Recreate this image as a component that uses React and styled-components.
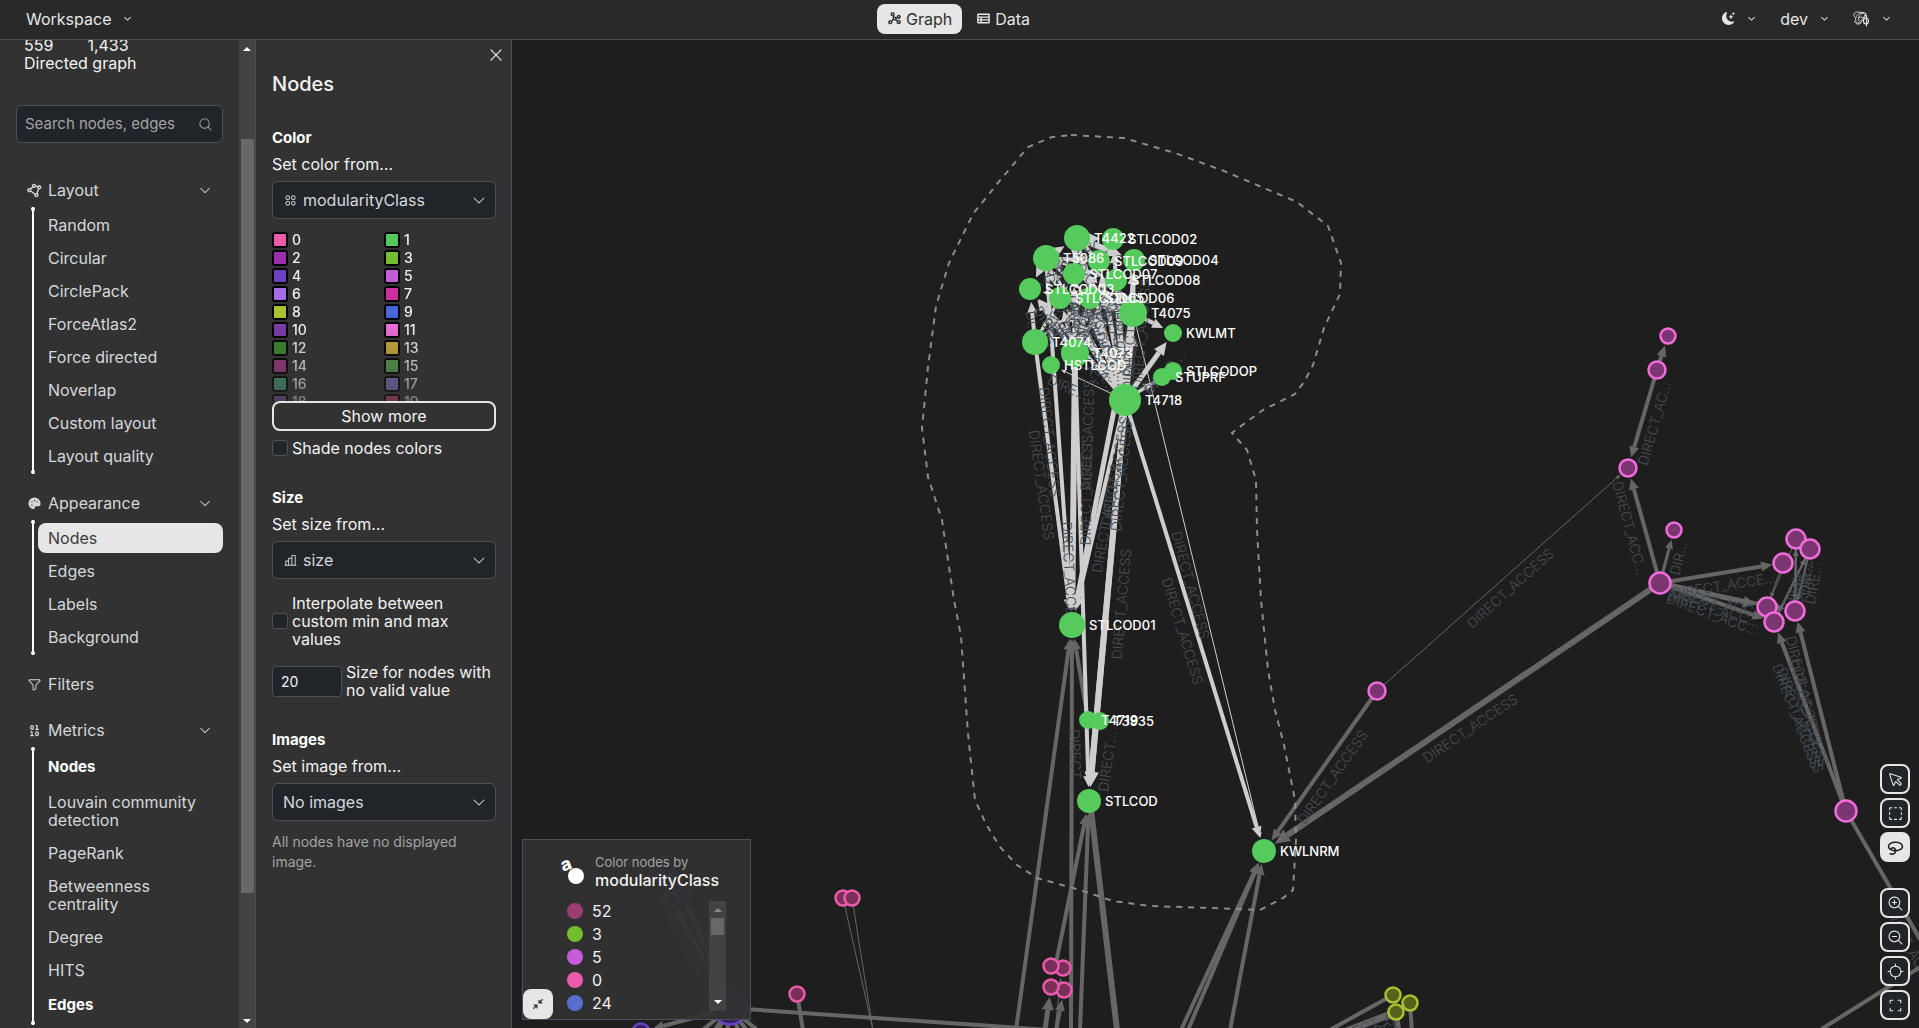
import React, { useState } from 'react';
import styled, { createGlobalStyle, css } from 'styled-components';
import {
  PiArrowsInSimpleBold,
  PiCaretDown,
  PiCaretDownBold,
  PiChartBar,
  PiCirclesFour,
  PiCornersOut,
  PiCursor,
  PiFunnel,
  PiGps,
  PiGraphBold,
  PiLassoBold,
  PiMagnifyingGlass,
  PiMagnifyingGlassMinus,
  PiMagnifyingGlassPlus,
  PiPaletteFill,
  PiPolygonBold,
  PiSelection,
  PiTableBold,
  PiX
} from 'react-icons/pi';
import { BsMoonStarsFill } from 'react-icons/bs';
import { LuBinary } from 'react-icons/lu';

const theme = {
  header: '#292929',
  panel: '#323232',
  stage: '#1e1e1e',
  field: '#212529',
  border: '#495057',
  light: '#e6e6e6',
  text: '#f2f2f2',
  nav: '#d5d8db',
  muted: '#a3a3a3',
  track: '#424242',
  thumb: '#686868'
};

const GlobalStyle = createGlobalStyle`
  * {
    box-sizing: border-box;
  }

  body {
    margin: 0;
    background: ${theme.stage};
    color: ${theme.text};
    font-family: Inter, 'DM Sans', sans-serif;
    font-size: 16px;
    line-height: 18px;
  }

  button, input, select {
    font: inherit;
    color: inherit;
  }

  button {
    cursor: pointer;
  }

  h2, h3, p, ul {
    margin: 0;
    padding: 0;
  }
`;

const Page = styled.div`
  display: flex;
  flex-direction: column;
  height: 100vh;
  overflow: hidden;
`;

const Header = styled.header`
  display: grid;
  grid-template-columns: 1fr auto 1fr;
  align-items: center;
  height: 40px;
  padding: 0 18px 2px 16px;
  background: ${theme.header};
  border-bottom: 1px solid ${theme.border};
  flex-shrink: 0;
`;

const HeaderGroup = styled.div`
  display: flex;
  align-items: center;
  justify-content: ${props => props.$end ? 'flex-end' : 'flex-start'};
  gap: 4px;
`;

const HeaderButton = styled.button`
  display: flex;
  align-items: center;
  gap: ${props => props.$menu ? 12 : 4}px;
  height: 30px;
  padding: 0 10px;
  border: none;
  border-radius: 8px;
  background: ${props => props.$active ? theme.light : 'transparent'};
  color: ${props => props.$active ? '#2f2f2f' : theme.light};
`;

const Body = styled.div`
  display: flex;
  flex: 1;
  min-height: 0;
`;

const Sidebar = styled.aside`
  display: flex;
  width: 256px;
  flex-shrink: 0;
  background: ${theme.panel};
  border-right: 1px solid ${theme.border};
  overflow: hidden;
`;

const SidebarContent = styled.div`
  flex: 1;
  min-width: 0;
  margin-top: -4px;
  padding: 0 16px;
`;

const Scrollbar = styled.div`
  display: flex;
  flex-direction: column;
  align-items: center;
  justify-content: space-between;
  width: ${props => props.$wide ? 17 : 16}px;
  flex-shrink: 0;
  padding: ${props => props.$wide ? '7px 0' : '7px 0 5px'};
  background: ${theme.track};
`;

const ScrollArrow = styled.span`
  width: 0;
  height: 0;
  border: 4px solid transparent;
  ${props => props.$down
    ? css`border-top-color: #fff; border-bottom: none;`
    : css`border-bottom-color: ${props.$dim ? '#8a8a8a' : '#fff'}; border-top: none;`}
`;

const ScrollTrack = styled.div`
  display: flex;
  flex-direction: column;
  flex: 1;
  width: 13px;
  padding: 6px 0;
`;

const ScrollSpace = styled.span`
  flex: ${props => props.$part};
`;

const ScrollThumb = styled.span`
  flex: ${props => props.$part};
  background: ${theme.thumb};
`;

const Counts = styled.div`
  display: flex;
  gap: 34px;
  padding: 0 8px;
`;

const GraphType = styled.p`
  padding: 0 8px;
`;

const Search = styled.label`
  display: flex;
  align-items: center;
  height: 38px;
  margin: 33px 0 30px;
  padding: 0 9px 0 8px;
  background: ${theme.field};
  border: 1px solid ${theme.border};
  border-radius: 6px;
  color: ${theme.muted};
  font-size: 15px;

  input {
    flex: 1;
    min-width: 0;
    padding: 0;
    background: none;
    border: none;
    outline: none;
  }

  input::placeholder {
    color: ${theme.muted};
    opacity: 1;
  }
`;

const NavSection = styled.section`
  margin-bottom: 12px;
`;

const NavHeading = styled.button`
  display: grid;
  grid-template-columns: 14px 1fr auto;
  align-items: center;
  gap: 7px;
  width: 100%;
  height: 34px;
  padding: 0 11px;
  border: none;
  background: none;
  color: ${theme.nav};
  text-align: left;
`;

const NavList = styled.ul`
  position: relative;
  display: flex;
  flex-direction: column;
  gap: 3px;
  margin-left: 16px;
  padding: 3px 0 3px 4px;
  list-style: none;
  border-left: 2px solid #fff;

  &::before,
  &::after {
    content: '';
    position: absolute;
    left: -3px;
    width: 4px;
    height: 4px;
    border-radius: 50%;
    background: #fff;
  }

  &::before {
    top: 0;
  }

  &::after {
    bottom: 0;
  }
`;

const NavItem = styled.button`
  display: block;
  width: 100%;
  padding: 6px 10px;
  border: none;
  border-radius: 8px;
  background: ${props => props.$active ? theme.light : 'transparent'};
  color: ${props => props.$active ? '#3a3a3a' : theme.nav};
  text-align: left;
`;

const NavSubhead = styled.h3`
  padding: 8px 10px;
  font-size: 15px;
  font-weight: 700;
  color: #fff;
`;

const Panel = styled.section`
  width: 256px;
  flex-shrink: 0;
  padding: 6px 15px 6px 16px;
  background: ${theme.panel};
  border-right: 1px solid ${theme.border};
`;

const CloseRow = styled.div`
  display: flex;
  justify-content: flex-end;
  margin-right: -9px;
`;

const CloseButton = styled.button`
  display: flex;
  padding: 0;
  border: none;
  background: none;
`;

const PanelTitle = styled.h2`
  margin: 8px 0 33px;
  font-size: 20px;
  line-height: 24px;
  font-weight: 500;
`;

const Block = styled.section`
  margin-bottom: 32px;
`;

const BlockTitle = styled.h3`
  margin-bottom: 8px;
  font-size: 15px;
  font-weight: 700;
  color: #fff;
`;

const FieldLabel = styled.label`
  display: block;
  margin-bottom: 8px;
`;

const SelectBox = styled.div`
  display: flex;
  align-items: center;
  gap: 5px;
  height: 38px;
  padding: 0 8px 0 10px;
  background: ${theme.field};
  border: 1px solid ${theme.border};
  border-radius: 6px;
  color: ${theme.nav};

  select {
    flex: 1;
    min-width: 0;
    padding: 0;
    appearance: none;
    background: none;
    border: none;
    outline: none;
  }
`;

const Palette = styled.div`
  display: grid;
  grid-template-columns: 1fr 1fr;
  grid-auto-rows: 18px;
  height: 170px;
  margin-top: 12px;
  overflow: hidden;
  font-size: 14px;
  font-weight: 500;
  mask-image: linear-gradient(#000 55%, rgba(0, 0, 0, 0.4));
`;

const PaletteEntry = styled.label`
  display: flex;
  align-items: center;
  gap: 4px;
`;

const Swatch = styled.input`
  width: 16px;
  height: 16px;
  padding: 0;
  appearance: none;
  border: 2px solid #000;
  border-radius: 3px;
  background: none;

  &::-webkit-color-swatch-wrapper {
    padding: 0;
  }

  &::-webkit-color-swatch {
    border: none;
    border-radius: 0;
  }
`;

const ShowMore = styled.button`
  display: block;
  width: 100%;
  height: 30px;
  margin-bottom: 8px;
  padding: 0;
  background: ${theme.panel};
  border: 2px solid ${theme.light};
  border-radius: 8px;
`;

const CheckLabel = styled.label`
  display: flex;
  align-items: center;
  gap: 4px;
  margin-top: ${props => props.$spaced ? 15 : 0}px;
`;

const Checkbox = styled.input`
  width: 16px;
  height: 16px;
  flex-shrink: 0;
  margin: 0;
  appearance: none;
  background: ${theme.field};
  border: 1px solid ${theme.border};
  border-radius: 3px;
`;

const NumberRow = styled.label`
  display: flex;
  align-items: center;
  gap: 4px;
  margin-top: 15px;
`;

const NumberInput = styled.input`
  width: 70px;
  height: 31px;
  flex-shrink: 0;
  padding: 0 8px;
  background: ${theme.field};
  border: 1px solid ${theme.border};
  border-radius: 4px;
  font-size: 14px;
`;

const Hint = styled.p`
  margin-top: 11px;
  font-size: 14px;
  line-height: 20px;
  color: ${theme.muted};
`;

const Stage = styled.main`
  position: relative;
  flex: 1;
  min-width: 0;
`;

const GraphSvg = styled.svg`
  display: block;
  width: 100%;
  height: 100%;
  font-family: Inter, sans-serif;
`;

const NodeLabel = styled.text`
  fill: #fff;
  font-size: 13px;
  font-weight: 500;
  dominant-baseline: central;
`;

const EdgeLabel = styled.text`
  fill: #454d55;
  font-size: 14px;
  font-weight: 300;
  text-anchor: middle;
  dominant-baseline: central;
`;

const Legend = styled.aside`
  position: absolute;
  left: 10px;
  bottom: 8px;
  width: 229px;
  padding: 13px 24px 8px 44px;
  background: rgba(50, 50, 50, 0.93);
  border: 1px solid ${theme.border};
`;

const LegendHeader = styled.div`
  display: flex;
  align-items: center;
  gap: 10px;
  margin-left: -6px;
  white-space: nowrap;
`;

const LegendCaption = styled.p`
  font-size: 13px;
  color: ${theme.muted};
`;

const LegendTitle = styled.p`
  font-weight: 500;
`;

const LegendBody = styled.div`
  display: flex;
  justify-content: space-between;
  height: 110px;
  margin-top: 12px;
`;

const LegendList = styled.ul`
  display: flex;
  flex-direction: column;
  gap: 3px;
  list-style: none;
  overflow: hidden;

  li {
    display: flex;
    align-items: center;
    gap: 9px;
    height: 20px;
    flex-shrink: 0;
  }
`;

const Dot = styled.span`
  width: 16px;
  height: 16px;
  border-radius: 50%;
  background: ${props => props.$color};
`;

const CollapseButton = styled.button`
  position: absolute;
  left: 0;
  bottom: 0;
  display: flex;
  align-items: center;
  justify-content: center;
  width: 30px;
  height: 30px;
  padding: 0;
  border: none;
  border-radius: 8px;
  background: ${theme.light};
  color: #2f2f2f;
`;

const Toolbar = styled.div`
  position: absolute;
  right: 9px;
  bottom: 8px;
  display: flex;
  flex-direction: column;
  gap: 26px;
`;

const ToolGroup = styled.div`
  display: flex;
  flex-direction: column;
  gap: 4px;
`;

const ToolButton = styled.button`
  display: flex;
  align-items: center;
  justify-content: center;
  width: 30px;
  height: 30px;
  padding: 0;
  border: 2px solid ${theme.light};
  border-radius: 8px;
  background: ${props => props.$active ? theme.light : theme.field};
  color: ${props => props.$active ? theme.field : theme.light};
`;

const layouts = [
  'Random', 'Circular', 'CirclePack', 'ForceAtlas2', 'Force directed',
  'Noverlap', 'Custom layout', 'Layout quality'
];

const appearances = ['Nodes', 'Edges', 'Labels', 'Background'];

const nodeMetrics = [
  'Louvain community detection', 'PageRank', 'Betweenness centrality', 'Degree', 'HITS'
];

const palette = [
  '#ea5bab', '#50c95a', '#9a2eab', '#73bd2f', '#6a42c1', '#c65bdb', '#a56be6',
  '#cd2fa2', '#a9c133', '#4a66dd', '#7b3aa5', '#ee6cdb', '#3c8c2a', '#c9ae3a',
  '#a03a86', '#55a452', '#43a276', '#8270c4', '#7d4fa8', '#d13f77'
];

const legendItems = [
  ['52', '#9a3d70'],
  ['3', '#73bd2f'],
  ['5', '#c65bdb'],
  ['0', '#ea5bab'],
  ['24', '#566ed0']
];

// id: [x, y, radius, label]
const selectedNodes = {
  a: [1077, 238, 13, 'T4422'],
  b: [1113, 239, 11, 'STLCOD02'],
  c: [1046, 258, 13, 'T5086'],
  d: [1099, 261, 11, 'STLCOD09'],
  e: [1134, 260, 11, 'STLCOD04'],
  f: [1074, 274, 11, 'STLCOD07'],
  g: [1116, 280, 11, 'STLCOD08'],
  h: [1030, 289, 11, 'STLCOD03'],
  i: [1060, 298, 11, 'STLCOD05'],
  j: [1090, 298, 11, 'STLCOD06'],
  k: [1133, 313, 14, 'T4075'],
  l: [1173, 333, 9, 'KWLMT'],
  m: [1035, 342, 13, 'T4074'],
  n: [1075, 353, 14, 'T4073'],
  o: [1051, 365, 9, 'HSTLCOD'],
  p: [1173, 371, 9, 'STLCODOP'],
  q: [1162, 377, 9, 'STUPRF'],
  r: [1125, 400, 16, 'T4718'],
  s: [1072, 625, 13, 'STLCOD01'],
  t: [1088, 720, 9, 'T4719'],
  u: [1100, 721, 9, 'T3935'],
  v: [1089, 801, 12, 'STLCOD'],
  w: [1264, 851, 12, 'KWLNRM']
};

const groups = {
  orchid: { stroke: '#f06cdb', fill: '#7b3672' },
  pink: { stroke: '#ea5bab', fill: '#7a2f58' },
  olive: { stroke: '#a9c133', fill: '#56621c' },
  violet: { stroke: '#6a42c1', fill: '#322263' }
};

const otherNodes = [
  [1668, 336, 9, 'orchid'], [1657, 370, 10, 'orchid'], [1628, 468, 10, 'orchid'],
  [1674, 530, 9, 'orchid'], [1660, 583, 12, 'orchid'], [1796, 539, 11, 'orchid'],
  [1810, 549, 11, 'orchid'], [1783, 563, 11, 'orchid'], [1767, 607, 11, 'orchid'],
  [1774, 622, 11, 'orchid'], [1795, 611, 11, 'orchid'], [1846, 811, 12, 'orchid'],
  [1377, 691, 10, 'orchid'],
  [843, 898, 9, 'pink'], [852, 898, 9, 'pink'], [797, 994, 9, 'pink'],
  [1063, 968, 9, 'pink'], [1051, 966, 9, 'pink'], [1064, 990, 9, 'pink'],
  [1051, 987, 9, 'pink'],
  [1393, 995, 9, 'olive'], [1410, 1003, 9, 'olive'], [1396, 1012, 9, 'olive'],
  [730, 1008, 18, 'violet'], [641, 1032, 10, 'violet'], [671, 899, 8, 'violet'],
  [683, 894, 8, 'violet'], [658, 872, 8, 'violet'], [668, 869, 8, 'violet']
];

// [x1, y1, x2, y2, target radius, width]
const dimEdges = [
  [1016, 1030, 1072, 625, 14, 4], [1071, 1030, 1072, 625, 14, 4],
  [1088, 720, 1072, 625, 14, 4], [1080, 1030, 1089, 801, 13, 4],
  [1117, 1030, 1090, 801, 0, 6], [1055, 968, 1089, 801, 13, 4],
  [1045, 1030, 1051, 987, 10, 5], [1056, 1030, 1064, 990, 10, 4],
  [1055, 1030, 1062, 968, 10, 1],
  [1181, 1030, 1264, 851, 13, 4], [1188, 1030, 1264, 851, 13, 4],
  [1230, 1030, 1264, 851, 13, 4],
  [1377, 691, 1264, 851, 13, 4], [1660, 583, 1264, 851, 13, 6],
  [1377, 691, 1628, 468, 10, 1], [1657, 370, 1668, 336, 10, 4],
  [1657, 370, 1628, 468, 11, 4], [1660, 583, 1628, 468, 11, 4],
  [1660, 583, 1674, 530, 10, 3], [1660, 583, 1783, 563, 11, 4],
  [1660, 583, 1767, 607, 11, 5], [1660, 583, 1774, 622, 11, 4],
  [1660, 583, 1795, 611, 11, 3], [1846, 811, 1774, 622, 11, 4],
  [1846, 811, 1795, 611, 11, 4], [1846, 811, 1925, 948, 0, 4],
  [1820, 1030, 1925, 964, 0, 4],
  [1783, 563, 1767, 607, 10, 1], [1796, 539, 1767, 607, 10, 1],
  [1796, 539, 1795, 611, 10, 2], [1795, 611, 1796, 539, 10, 2],
  [1810, 549, 1774, 622, 10, 2], [1774, 622, 1810, 549, 10, 2],
  [1810, 549, 1795, 611, 10, 2],
  [843, 898, 873, 1030, 0, 1], [852, 898, 873, 1030, 0, 1],
  [797, 994, 803, 1030, 0, 4], [730, 1008, 1050, 1030, 0, 4],
  [730, 1008, 641, 1032, 12, 4], [730, 1008, 671, 899, 10, 4],
  [730, 1008, 683, 894, 10, 4], [730, 1008, 690, 1040, 0, 4],
  [730, 1008, 710, 1040, 0, 6], [730, 1008, 726, 1040, 0, 4],
  [730, 1008, 742, 1040, 0, 4], [730, 1008, 754, 1040, 0, 4],
  [730, 1008, 770, 1040, 0, 4],
  [1393, 995, 1326, 1032, 0, 4], [1396, 1012, 1344, 1032, 0, 7],
  [1396, 1012, 1399, 1032, 0, 5], [1410, 1003, 1412, 1032, 0, 4]
];

// [source, target, width]
const brightLinks = [
  ['r', 'w', 4], ['k', 'w', 1], ['r', 's', 4], ['k', 's', 5], ['n', 's', 6],
  ['m', 's', 4], ['c', 's', 4], ['n', 'v', 4], ['r', 'v', 6], ['k', 'v', 6],
  ['k', 'l', 4], ['r', 'l', 5], ['r', 'q', 3], ['r', 'p', 3], ['r', 'o', 1],
  ['r', 'k', 7], ['r', 'g', 6], ['r', 'j', 7], ['r', 'i', 5], ['r', 'f', 5],
  ['r', 'h', 4], ['r', 'd', 5], ['r', 'e', 4], ['r', 'b', 4], ['a', 'b', 5],
  ['c', 'a', 7], ['a', 'd', 5], ['a', 'e', 6], ['c', 'h', 7], ['c', 'f', 5],
  ['c', 'd', 4], ['m', 'h', 4], ['m', 'i', 3], ['n', 'i', 4], ['n', 'j', 4],
  ['n', 'f', 5], ['n', 'h', 4], ['k', 'g', 5], ['k', 'j', 5], ['k', 'e', 4],
  ['k', 'd', 4], ['k', 'f', 3], ['a', 'g', 4], ['a', 'j', 4], ['a', 'f', 4],
  ['k', 'i', 3], ['k', 'h', 2], ['c', 'g', 3], ['c', 'j', 3], ['c', 'i', 4],
  ['n', 'd', 3], ['n', 'g', 4], ['m', 'f', 3], ['m', 'j', 2], ['r', 'c', 3],
  ['r', 'a', 4]
];

const FULL = 'DIRECT_ACCESS';

// [center x, center y, angle, text]
const edgeLabels = [
  [1470, 728, -34, FULL], [1332, 777, -55, FULL], [1510, 588, -42, FULL],
  [1654, 423, -74, 'DIRECT_AC...'], [1630, 528, 75, 'DIRECT_ACC...'],
  [1678, 558, -76, 'DIR...'], [1724, 585, -9, 'DIRECT_ACCE...'],
  [1718, 602, 13, 'DIRECT_ACC...'], [1714, 608, 17, 'DIRECT_ACC...'],
  [1713, 614, 20, 'DIRECT_ACC...'], [1813, 583, -80, 'DIRE...'],
  [1802, 584, -75, 'DIRE...'], [1797, 582, -66, 'DIREC...'], [1806, 578, -84, 'DIR...'],
  [1804, 690, 76, FULL], [1809, 713, 74, FULL], [1797, 716, 69, FULL],
  [1801, 720, 70, FULL],
  [1191, 585, 75, FULL], [1183, 631, 73, FULL], [1042, 485, 82, FULL],
  [1050, 442, 84, FULL], [1086, 490, -89, FULL], [1087, 435, -88, FULL],
  [1070, 577, 87, FULL], [1106, 518, -80, FULL], [1115, 471, -80, FULL],
  [1121, 476, -84, FULL], [1121, 604, -85, FULL], [1076, 760, 88, 'DIRECT...'],
  [1107, 761, -82, 'DIRECT...'], [1141, 334, -85, FULL], [1068, 387, 24, 'DIRE...'],
  [1164, 373, -48, 'DIREC...'], [1155, 381, -30, 'DI...'],
  [1372, 1024, -22, 'DIRECT_AC...'], [1388, 1028, -12, 'ACCE...'],
  [1912, 950, 60, 'DIRECT_ACCESS'], [690, 950, 62, FULL], [680, 930, 66, 'DIRECT_A...']
];

const hull = [
  [1071, 135], [1124, 138], [1175, 153], [1224, 171], [1297, 202], [1328, 226],
  [1341, 263], [1340, 294], [1324, 328], [1313, 365], [1304, 382], [1295, 394],
  [1263, 410], [1245, 423], [1232, 433], [1247, 450], [1256, 480], [1257, 530],
  [1261, 600], [1268, 670], [1275, 710], [1284, 745], [1295, 800], [1296, 840],
  [1293, 890], [1283, 898], [1260, 910], [1210, 908], [1150, 906], [1113, 901],
  [1080, 890], [1037, 878], [1017, 865], [1000, 847], [986, 824], [975, 800],
  [968, 734], [961, 636], [954, 600], [948, 560], [942, 520], [928, 477], [922, 428],
  [928, 367], [936, 306], [949, 263], [973, 214], [997, 184], [1028, 147], [1052, 137]
];

const Edge = ({ edge, color }) => {
  const [x1, y1, x2, y2, radius, width] = edge;
  const length = Math.hypot(x2 - x1, y2 - y1);
  const ux = (x2 - x1) / length;
  const uy = (y2 - y1) / length;
  const head = radius ? width * 2 + 3 : 0;
  const half = width + 1;
  const tipX = x2 - ux * radius;
  const tipY = y2 - uy * radius;
  const baseX = tipX - ux * head;
  const baseY = tipY - uy * head;

  return (
    <g stroke={color} fill={color}>
      <line x1={x1} y1={y1} x2={baseX} y2={baseY} strokeWidth={width} />
      {radius > 0 && (
        <polygon
          stroke="none"
          points={`${tipX},${tipY} ${baseX - uy * half},${baseY + ux * half} ${baseX + uy * half},${baseY - ux * half}`}
        />
      )}
    </g>
  );
};

const linkToEdge = ([source, target, width]) => {
  const [x1, y1] = selectedNodes[source];
  const [x2, y2, r] = selectedNodes[target];
  return [x1, y1, x2, y2, r + 2, width];
};

// Labels of the short links inside the selected cluster
const clusterLabels = brightLinks.slice(15).map(([source, target]) => {
  const [x1, y1] = selectedNodes[source];
  const [x2, y2] = selectedNodes[target];
  const length = Math.hypot(x2 - x1, y2 - y1);
  let angle = Math.atan2(y2 - y1, x2 - x1) * 180 / Math.PI;
  if (angle > 90) angle -= 180;
  if (angle < -90) angle += 180;
  const text = length > 110 ? 'DIRECT_A...' : length > 70 ? 'DIREC...' : 'DI...';
  return [(x1 + x2) / 2, (y1 + y2) / 2 + 8, angle, text];
});

const GraphView = () => (
  <GraphSvg viewBox="512 40 1407 988" preserveAspectRatio="xMidYMid slice">
    {dimEdges.map((edge, i) => <Edge key={i} edge={edge} color="#666" />)}
    {brightLinks.map((link, i) => <Edge key={i} edge={linkToEdge(link)} color="#cecece" />)}
    {[...clusterLabels, ...edgeLabels].map(([x, y, angle, text], i) => (
      <EdgeLabel key={i} x={x} y={y} transform={`rotate(${angle} ${x} ${y})`}>{text}</EdgeLabel>
    ))}
    {otherNodes.map(([x, y, r, group], i) => (
      <circle key={i} cx={x} cy={y} r={r - 1.5} strokeWidth="2.5" {...groups[group]} />
    ))}
    {Object.values(selectedNodes).map(([x, y, r, label]) => (
      <circle key={label} cx={x} cy={y} r={r} fill="#54cb5c" />
    ))}
    {Object.values(selectedNodes).map(([x, y, r, label]) => (
      <NodeLabel key={label} x={x + r + 4} y={y}>{label}</NodeLabel>
    ))}
    <polygon
      points={hull.map(point => point.join(',')).join(' ')}
      fill="none"
      stroke="#8c8c8c"
      strokeWidth="2"
      strokeDasharray="6 6"
    />
  </GraphSvg>
);

const Logo = () => (
  <svg width="17" height="16" viewBox="0 0 34 32" fill="none" stroke="currentColor" strokeWidth="1.800" strokeLinecap="round">
    <path d="M4 12C-1 8 2 2 9 2c6 0 9 2 13 1" />
    <path d="M21 4C14 1 5 9 5 17c0 6 5 9 10 6 6-3 9-10 11-18" />
    <path d="M25 5c-5-4-12 2-14 9-2 6 2 8 6 4s7-9 8-13" />
    <path d="M3 21c3 6 9 7 13 3M13 13c3-2 6-1 7 1" />
    <ellipse cx="26" cy="20" rx="5" ry="6" strokeWidth="2.200" />
    <path d="M27 9v21" strokeWidth="2.200" />
  </svg>
);

const LegendIcon = () => (
  <svg width="24" height="28" viewBox="0 0 24 28" fill="#fff">
    <text x="0" y="13" fontSize="18" fontWeight="800" transform="rotate(-20 6 8)">a</text>
    <circle cx="15" cy="19" r="8" />
  </svg>
);

const Section = ({ icon, title, children }) => (
  <NavSection>
    <NavHeading>
      {icon}
      <span>{title}</span>
      {children && <PiCaretDown size={14} />}
    </NavHeading>
    {children && <NavList>{children}</NavList>}
  </NavSection>
);

const Select = ({ id, icon, value }) => (
  <SelectBox>
    {icon}
    <select id={id} defaultValue={value}>
      <option>{value}</option>
    </select>
    <PiCaretDown size={16} />
  </SelectBox>
);

const App = () => {
  const [page, setPage] = useState('Nodes');
  const [tool, setTool] = useState('lasso');

  const renderItems = (items) => items.map(item => (
    <li key={item}>
      <NavItem $active={page === item} onClick={() => setPage(item)}>{item}</NavItem>
    </li>
  ));

  return (
    <Page>
      <GlobalStyle />
      <Header>
        <HeaderGroup>
          <HeaderButton $menu>Workspace <PiCaretDownBold size={9} /></HeaderButton>
        </HeaderGroup>
        <HeaderGroup>
          <HeaderButton $active><PiGraphBold size={15} /> Graph</HeaderButton>
          <HeaderButton><PiTableBold size={15} /> Data</HeaderButton>
        </HeaderGroup>
        <HeaderGroup $end>
          <HeaderButton $menu aria-label="Theme"><BsMoonStarsFill size={13} /> <PiCaretDownBold size={9} /></HeaderButton>
          <HeaderButton $menu>dev <PiCaretDownBold size={9} /></HeaderButton>
          <HeaderButton $menu aria-label="About"><Logo /> <PiCaretDownBold size={9} /></HeaderButton>
        </HeaderGroup>
      </Header>

      <Body>
        <Sidebar>
          <SidebarContent>
            <Counts>
              <span>559</span>
              <span>1,433</span>
            </Counts>
            <GraphType>Directed graph</GraphType>
            <Search>
              <input type="text" placeholder="Search nodes, edges" aria-label="Search nodes, edges" />
              <PiMagnifyingGlass size={15} />
            </Search>

            <Section icon={<PiPolygonBold size={15} />} title="Layout">
              {renderItems(layouts)}
            </Section>
            <Section icon={<PiPaletteFill size={15} />} title="Appearance">
              {renderItems(appearances)}
            </Section>
            <Section icon={<PiFunnel size={15} />} title="Filters" />
            <Section icon={<LuBinary size={15} />} title="Metrics">
              <li><NavSubhead>Nodes</NavSubhead></li>
              {renderItems(nodeMetrics)}
              <li><NavSubhead>Edges</NavSubhead></li>
            </Section>
          </SidebarContent>
          <Scrollbar>
            <ScrollArrow />
            <ScrollTrack>
              <ScrollSpace $part={82} />
              <ScrollThumb $part={753} />
              <ScrollSpace $part={120} />
            </ScrollTrack>
            <ScrollArrow $down />
          </Scrollbar>
        </Sidebar>

        <Panel>
          <CloseRow>
            <CloseButton aria-label="Close"><PiX size={18} /></CloseButton>
          </CloseRow>
          <PanelTitle>Nodes</PanelTitle>

          <Block>
            <BlockTitle>Color</BlockTitle>
            <FieldLabel htmlFor="color">Set color from…</FieldLabel>
            <Select id="color" icon={<PiCirclesFour size={15} />} value="modularityClass" />
            <Palette>
              {palette.map((color, i) => (
                <PaletteEntry key={color}>
                  <Swatch type="color" defaultValue={color} />
                  {i}
                </PaletteEntry>
              ))}
            </Palette>
            <ShowMore>Show more</ShowMore>
            <CheckLabel>
              <Checkbox type="checkbox" />
              Shade nodes colors
            </CheckLabel>
          </Block>

          <Block>
            <BlockTitle>Size</BlockTitle>
            <FieldLabel htmlFor="size">Set size from…</FieldLabel>
            <Select id="size" icon={<PiChartBar size={15} />} value="size" />
            <CheckLabel $spaced>
              <Checkbox type="checkbox" />
              Interpolate between custom min and max values
            </CheckLabel>
            <NumberRow>
              <NumberInput type="text" defaultValue="20" />
              Size for nodes with no valid value
            </NumberRow>
          </Block>

          <Block>
            <BlockTitle>Images</BlockTitle>
            <FieldLabel htmlFor="images">Set image from…</FieldLabel>
            <Select id="images" value="No images" />
            <Hint>All nodes have no displayed image.</Hint>
          </Block>
        </Panel>

        <Stage>
          <GraphView />

          <Legend>
            <LegendHeader>
              <LegendIcon />
              <div>
                <LegendCaption>Color nodes by</LegendCaption>
                <LegendTitle>modularityClass</LegendTitle>
              </div>
            </LegendHeader>
            <LegendBody>
              <LegendList>
                {legendItems.map(([label, color]) => (
                  <li key={label}><Dot $color={color} />{label}</li>
                ))}
              </LegendList>
              <Scrollbar $wide>
                <ScrollArrow $dim />
                <ScrollTrack>
                  <ScrollThumb $part={17} />
                  <ScrollSpace $part={59} />
                </ScrollTrack>
                <ScrollArrow $down />
              </Scrollbar>
            </LegendBody>
            <CollapseButton aria-label="Collapse legend"><PiArrowsInSimpleBold size={14} /></CollapseButton>
          </Legend>

          <Toolbar>
            <ToolGroup>
              <ToolButton aria-label="Pointer" $active={tool === 'pointer'} onClick={() => setTool('pointer')}>
                <PiCursor size={17} />
              </ToolButton>
              <ToolButton aria-label="Rectangle" $active={tool === 'rect'} onClick={() => setTool('rect')}>
                <PiSelection size={17} />
              </ToolButton>
              <ToolButton aria-label="Lasso" $active={tool === 'lasso'} onClick={() => setTool('lasso')}>
                <PiLassoBold size={17} />
              </ToolButton>
            </ToolGroup>
            <ToolGroup>
              <ToolButton aria-label="Zoom in"><PiMagnifyingGlassPlus size={17} /></ToolButton>
              <ToolButton aria-label="Zoom out"><PiMagnifyingGlassMinus size={17} /></ToolButton>
              <ToolButton aria-label="Center"><PiGps size={17} /></ToolButton>
              <ToolButton aria-label="Fullscreen"><PiCornersOut size={17} /></ToolButton>
            </ToolGroup>
          </Toolbar>
        </Stage>
      </Body>
    </Page>
  );
};

export default App;
